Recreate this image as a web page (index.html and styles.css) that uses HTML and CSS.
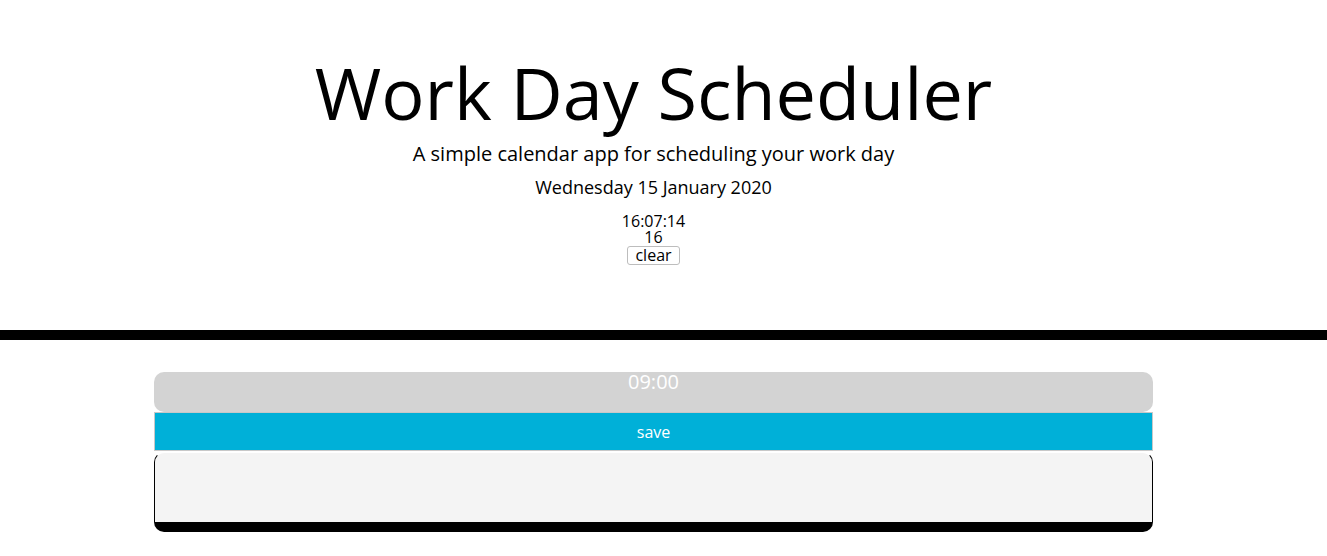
FILE: index.html
```html
<!DOCTYPE html>
<html lang="en">
<head>
<meta charset="utf-8">
<title>Work Day Scheduler</title>
<link rel="stylesheet" href="styles.css">
</head>
<body>
<header class="jumbotron">
  <div class="inner">
    <h1 class="title">Work Day Scheduler</h1>
    <p class="lead">A simple calendar app for scheduling your work day</p>
    <p class="date">Wednesday 15 January 2020</p>
    <div class="clock">16:07:14</div>
    <div class="hour">16</div>
    <button class="clear">clear</button>
  </div>
</header>
<main class="schedule">
  <div class="inner">
    <div class="row">
      <div class="time-block">09:00</div>
      <button class="save-btn">save</button>
      <textarea class="description"></textarea>
    </div>
  </div>
</main>
</body>
</html>
```

FILE: styles.css
```css
* { box-sizing: border-box; }
html, body { margin: 0; padding: 0; }
body {
  font-family: "Open Sans", "Liberation Sans", sans-serif;
  color: #000;
  background: #fff;
}
.inner {
  width: 1307px;
  display: flex;
  flex-direction: column;
  align-items: center;
}
.jumbotron {
  height: 330px;
  border-bottom: 10px solid #000;
  box-sizing: content-box;
}
.title {
  margin: 47px 0 0;
  font-size: 72px;
  font-weight: 400;
  line-height: 90px;
}
.lead {
  margin: 2px 0 0;
  font-size: 20px;
  font-weight: 400;
  line-height: 30px;
}
.date {
  margin: 3px 0 0;
  font-size: 18px;
  line-height: 30px;
}
.clock, .hour {
  font-size: 16px;
  line-height: 16px;
}
.clock { margin-top: 11px; }
.clear {
  font-family: "Open Sans", "Liberation Sans", sans-serif;
  font-size: 16px;
  line-height: 17px;
  padding: 0 7px;
  background: #fff;
  border: 1px solid #bdbdbd;
  border-radius: 3px;
  margin-top: 1px;
  color: #000;
}
.schedule .inner { padding-top: 32px; }
.row {
  width: 999px;
  display: flex;
  flex-direction: column;
}
.time-block {
  height: 40px;
  background: #d3d3d3;
  border-radius: 10px;
  color: #fff;
  text-align: center;
  font-size: 20px;
  line-height: 20px;
  padding-top: 0;
}
.save-btn {
  height: 39px;
  background: #00b0d8;
  border: 1px solid #c8c8c8;
  color: #fff;
  font-family: "Open Sans", "Liberation Sans", sans-serif;
  font-size: 16px;
  padding: 0;
}
.description {
  height: 80px;
  margin-top: 1px;
  background: #f4f4f4;
  border: 1px solid #000;
  border-top-color: #fff;
  border-bottom: 10px solid #000;
  border-radius: 10px;
  resize: none;
  display: block;
  width: 100%;
}
```
